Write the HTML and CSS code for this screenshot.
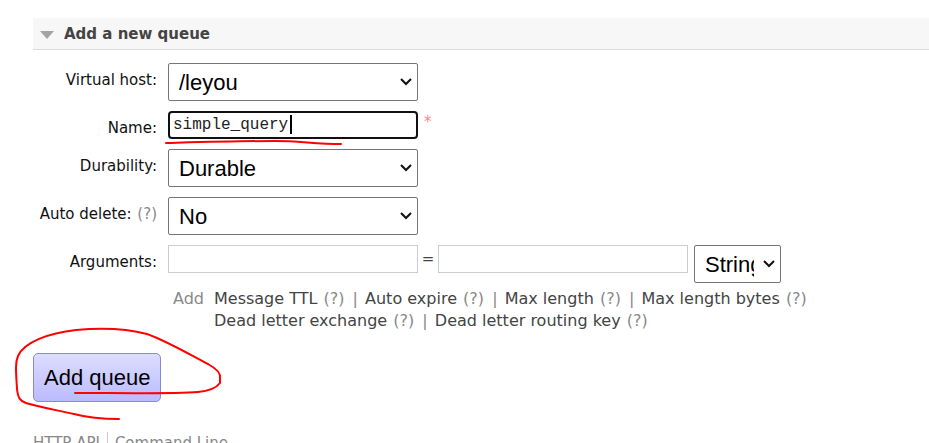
FILE: index.html
```
<!DOCTYPE html>
<html lang="en">
<head>
  <meta charset="UTF-8">
  <meta name="viewport" content="width=device-width, initial-scale=1.0">
  <title>Queues</title>
  <link rel="stylesheet" href="styles.css">
</head>
<body>
  <main>
    <h2><svg class="arrow" viewBox="0 0 14 8"><path d="M0 0h14L7 8z"/></svg>Add a new queue</h2>

    <form onsubmit="return false">
      <div class="form">
        <label for="vhost">Virtual host:</label>
        <div class="field">
          <select id="vhost"><option>/leyou</option><option>/</option></select>
        </div>

        <label for="name">Name:</label>
        <div class="field">
          <div class="active">
            <input type="text" id="name" value="simple_query">
            <span class="caret"></span>
            <svg class="underline" viewBox="0 0 180 8"><path d="M1 3C40 2 75 1 110 1C135 1 150 4 176 4"/></svg>
          </div>
          <span class="mand">*</span>
        </div>

        <label for="durable">Durability:</label>
        <div class="field">
          <select id="durable"><option>Durable</option><option>Transient</option></select>
        </div>

        <div class="label"><label for="autodelete">Auto delete:</label> <a href="#" class="help">(?)</a></div>
        <div class="field">
          <select id="autodelete"><option>No</option><option>Yes</option></select>
        </div>

        <label for="argkey">Arguments:</label>
        <div class="field">
          <input type="text" id="argkey">
          <span class="equals">=</span>
          <input type="text" id="argvalue" aria-label="Argument value">
          <select id="argtype" aria-label="Argument type"><option>String</option><option>Number</option><option>Boolean</option><option>List</option></select>
        </div>

        <div class="shortcuts">
          <span>Add</span>
          <div>
            <a href="#">Message TTL</a> <a href="#" class="help">(?)</a> <span class="sep">|</span>
            <a href="#">Auto expire</a> <a href="#" class="help">(?)</a> <span class="sep">|</span>
            <a href="#">Max length</a> <a href="#" class="help">(?)</a> <span class="sep">|</span>
            <a href="#">Max length bytes</a> <a href="#" class="help">(?)</a><br>
            <a href="#">Dead letter exchange</a> <a href="#" class="help">(?)</a> <span class="sep">|</span>
            <a href="#">Dead letter routing key</a> <a href="#" class="help">(?)</a>
          </div>
        </div>
      </div>

      <div class="submit">
        <button type="submit">Add queue</button>
        <svg class="circle" viewBox="0 0 210 96"><path d="M105 92C90 92 75 91 60 87C42 83 25 80 12 76C6 74 4 71 3 62C2 45 1 36 4 29C10 15 35 6 62 3C85 1 110 1 133 7C155 15 180 30 194 37C203 42 207 46 206 51L206 56C203 60 195 64 184 65C160 67 100 66 61 66"/></svg>
      </div>
    </form>
  </main>

  <footer>
    <a href="#">HTTP API</a>
    <a href="#">Command Line</a>
  </footer>
</body>
</html>
```
FILE: styles.css
```
body {
  margin: 0;
  padding: 18px 0 0 33px;
  background: #fff;
  color: #444;
  font: 15px/22px Verdana, "DejaVu Sans", sans-serif;
  overflow: hidden;
}
a {
  color: #444;
  text-decoration: none;
}
a.help {
  padding: 0 1px;
  color: #888;
}
h2 {
  display: flex;
  align-items: center;
  margin: 0 0 13px;
  padding: 6px 7px 4px;
  background: #f7f7f7;
  border-bottom: 1px solid #ddd;
  font-size: 15px;
  line-height: 21px;
}
.arrow {
  width: 14px;
  height: 8px;
  margin-right: 10px;
  fill: #a4a4a4;
}

/* form */
.form {
  display: grid;
  grid-template-columns: 124px 1fr;
  gap: 10px 11px;
}
.form > label,
.form > .label {
  padding-top: 6px;
  color: #111;
  line-height: 22px;
  text-align: right;
  white-space: nowrap;
}
.label .help {
  padding-right: 0;
}
.field {
  display: flex;
  align-items: flex-start;
}
input {
  box-sizing: border-box;
  display: block;
  width: 250px;
  height: 28px;
  margin: 0;
  padding: 4px;
  border: 1px solid #ccc;
  background: #fff;
  color: #222;
  font: 16px/18px "Courier New", "Liberation Mono", monospace;
}
select {
  box-sizing: border-box;
  width: 250px;
  height: 38px;
  margin: 0;
  padding: 0 26px 0 10px;
  border: 1px solid #767676;
  border-radius: 2px;
  background: #fff url("data:image/svg+xml,%3Csvg xmlns='http://www.w3.org/2000/svg' width='12' height='8'%3E%3Cpath d='M1 1l5 5 5-5' fill='none' stroke='%23111' stroke-width='2'/%3E%3C/svg%3E") no-repeat right 5px center;
  color: #000;
  font: 22px Arial, "Liberation Sans", sans-serif;
  -webkit-appearance: none;
  appearance: none;
}
#argtype {
  width: 87px;
  margin-left: 6px;
}
.equals {
  width: 20px;
  line-height: 28px;
  text-align: center;
}
.mand {
  margin-left: 6px;
  color: #f88;
}
.active {
  position: relative;
}
.active input {
  padding: 2px 3px;
  border: 2px solid #101010;
  border-radius: 4px;
}
.caret {
  position: absolute;
  top: 4px;
  left: 122px;
  width: 2px;
  height: 19px;
  background: #000;
}
.underline {
  position: absolute;
  top: 29px;
  left: -3px;
  width: 180px;
  height: 8px;
}
.underline path,
.circle path {
  fill: none;
  stroke: #f00;
  stroke-width: 2;
  stroke-linecap: round;
  stroke-linejoin: round;
}
.shortcuts {
  grid-column: 2;
  display: flex;
  gap: 10px;
  margin: -5px 0 0 5px;
  color: #888;
  font-size: 16px;
}
.sep {
  padding: 0 2px;
}

/* submit */
.submit {
  position: relative;
  margin-top: 21px;
}
button {
  display: block;
  padding: 10px;
  border: 1px solid #88d;
  border-radius: 5px;
  background: linear-gradient(#ddf, #bbf);
  color: #000;
  font: 22px/27px Arial, "Liberation Sans", sans-serif;
}
.circle {
  position: absolute;
  top: -26px;
  left: -19px;
  width: 210px;
  height: 96px;
  overflow: visible;
  pointer-events: none;
}

footer {
  display: flex;
  margin-top: 30px;
}
footer a {
  padding-right: 7px;
  color: #888;
}
footer a + a {
  padding-left: 7px;
  border-left: 1px solid #ccc;
}
```
